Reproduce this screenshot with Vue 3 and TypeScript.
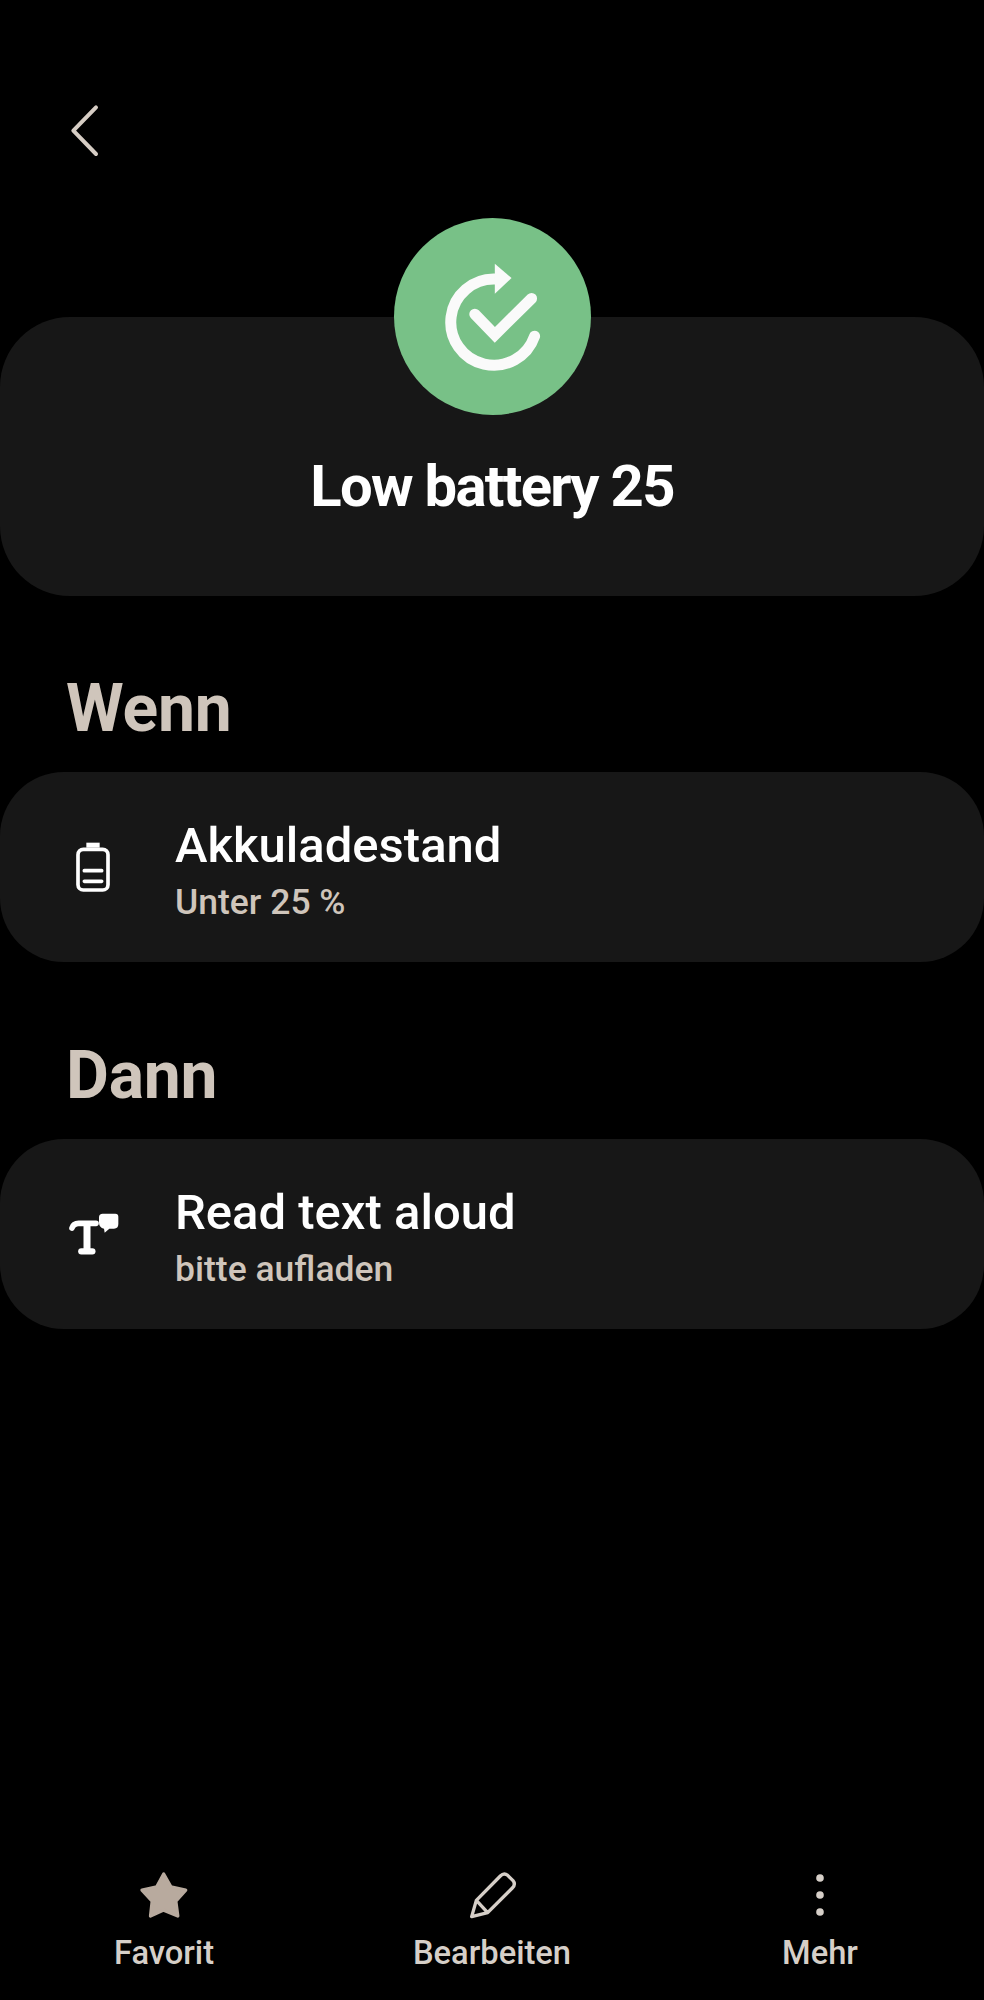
<script setup lang="ts">
const navItems = [
  { id: 'star', label: 'Favorit' },
  { id: 'pencil', label: 'Bearbeiten' },
  { id: 'more', label: 'Mehr' },
];
</script>

<template>
  <div class="page">
    <button class="back" aria-label="Zurück">
      <svg width="80" height="80" viewBox="0 0 240 240" fill="none">
        <path d="M138 52 L70 122 L138 192" stroke="#d6cdc4" stroke-width="12" stroke-linecap="round" stroke-linejoin="round" />
      </svg>
    </button>

    <section class="hero">
      <div class="badge">
        <svg viewBox="70 55 590 590" fill="none">
          <path d="M491 409 A129 129 0 1 1 372 238" stroke="#fafafa" stroke-width="33" stroke-linecap="round" />
          <path d="M372 192 L422 235 L372 282 Z" fill="#fafafa" />
          <path d="M312 343 L372 405 L482 296" stroke="#fafafa" stroke-width="33" stroke-linecap="round" />
        </svg>
      </div>
      <h1>Low battery 25</h1>
    </section>

    <h2>Wenn</h2>
    <div class="row">
      <div class="row-icon">
        <svg class="battery" width="38" height="52" viewBox="103 122 114 156" fill="none">
          <path d="M140 127 H180 V142 H140 Z" fill="#fff" />
          <rect x="115" y="147" width="90" height="122" rx="16" stroke="#fff" stroke-width="11" />
          <path d="M134 211 H186 M134 243 H186" stroke="#fff" stroke-width="11" stroke-linecap="round" />
        </svg>
      </div>
      <div class="row-text">
        <div class="row-title">Akkuladestand</div>
        <div class="row-sub">Unter 25 %</div>
      </div>
    </div>

    <h2 class="then">Dann</h2>
    <div class="row">
      <div class="row-icon">
        <svg width="52" height="44" viewBox="82 100 156 132" fill="none">
          <path d="M94 148 Q98 134 114 134 H166" stroke="#fff" stroke-width="17" stroke-linecap="round" />
          <path d="M139 134 V216" stroke="#fff" stroke-width="21" />
          <path d="M122 218 H155" stroke="#fff" stroke-width="19" stroke-linecap="round" />
          <path d="M186 105 H224 Q233 105 233 114 V136 Q233 150 220 150 H206 L192 162 L190 150 Q175 146 175 132 V116 Q175 105 186 105 Z" fill="#fff" />
        </svg>
      </div>
      <div class="row-text">
        <div class="row-title">Read text aloud</div>
        <div class="row-sub">bitte aufladen</div>
      </div>
    </div>

    <nav class="bottom-nav">
      <div v-for="item in navItems" :key="item.id" class="nav-item">
        <svg v-if="item.id === 'star'" width="50" height="48" viewBox="146 63 152 146">
          <path d="M221 72 L243 111 L288 121 L258 155 L264 200 L221 182 L181 200 L186 155 L155 121 L200 111 Z" fill="#b8aa9e" stroke="#b8aa9e" stroke-width="10" stroke-linejoin="round" />
        </svg>
        <svg v-else-if="item.id === 'pencil'" width="50" height="48" viewBox="200 65 150 144" fill="none">
          <path d="M214 202 L228 153 L300 80 Q311 69 322 78 L338 94 Q347 105 336 116 L262 190 Z M228 153 L262 190" stroke="#d6cfc8" stroke-width="10" stroke-linejoin="round" />
        </svg>
        <svg v-else width="50" height="48" viewBox="0 0 50 48">
          <circle cx="25" cy="7" r="3.8" fill="#d6cfc8" />
          <circle cx="25" cy="24" r="3.8" fill="#d6cfc8" />
          <circle cx="25" cy="41" r="3.8" fill="#d6cfc8" />
        </svg>
        <span>{{ item.label }}</span>
      </div>
    </nav>
  </div>
</template>

<style>
html,
body {
  background: #000;
}
</style>

<style scoped>
.page {
  display: flex;
  flex-direction: column;
  height: 2000px;
  background: #000;
  font-family: Roboto, "Liberation Sans", sans-serif;
  overflow: hidden;
}
.back {
  display: block;
  width: 80px;
  height: 80px;
  margin: 90px 0 0 50px;
  padding: 0;
  background: none;
  border: 0;
}
.back svg {
  display: block;
}
.hero {
  margin-top: 147px;
  height: 279px;
  background: #171717;
  border-radius: 70px;
  display: flex;
  flex-direction: column;
  align-items: center;
}
.badge {
  width: 197px;
  height: 197px;
  margin-top: -99px;
  border-radius: 50%;
  background: #78c187;
}
.badge svg {
  display: block;
  width: 100%;
  height: 100%;
}
h1 {
  margin: 38px 0 0;
  font-size: 58px;
  line-height: 66px;
  font-weight: 700;
  letter-spacing: -1.7px;
  color: #fff;
}
h2 {
  margin: 73px 0 23px 66px;
  font-size: 66px;
  line-height: 80px;
  font-weight: 700;
  letter-spacing: -0.2px;
  color: #cfc5bb;
}
h2.then {
  margin-top: 74px;
  margin-bottom: 23px;
}
.row {
  display: flex;
  align-items: center;
  height: 190px;
  background: #171717;
  border-radius: 64px;
}
.row-icon {
  width: 175px;
  padding-left: 68px;
  box-sizing: border-box;
}
.row-icon svg {
  display: block;
}
.row-icon .battery {
  margin-left: 6px;
}
.row-text {
  padding-top: 5px;
}
.row-title {
  font-size: 49px;
  line-height: 58px;
  font-weight: 500;
  color: #fff;
}
.row-sub {
  margin-top: 7px;
  font-size: 35.5px;
  line-height: 40px;
  font-weight: 500;
  color: #cfc5bb;
}
.bottom-nav {
  margin-top: auto;
  display: grid;
  grid-template-columns: repeat(3, 1fr);
  padding-bottom: 28px;
}
.nav-item {
  display: flex;
  flex-direction: column;
  align-items: center;
  gap: 15px;
  font-size: 32.7px;
  line-height: 38px;
  font-weight: 500;
  color: #d6cfc8;
}
</style>
